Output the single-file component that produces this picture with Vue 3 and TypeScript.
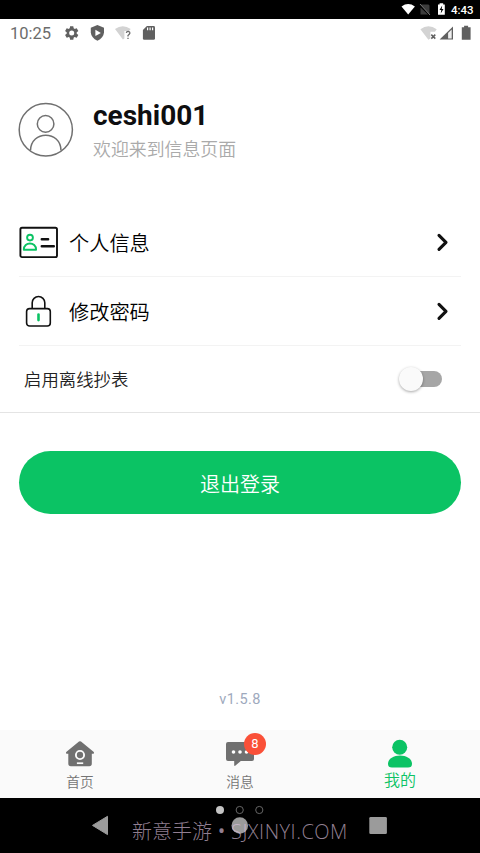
<script setup lang="ts">
import { ref } from 'vue'

interface MenuRow {
  id: string
  label: string
}

const rows: MenuRow[] = [
  { id: 'profile', label: '个人信息' },
  { id: 'password', label: '修改密码' },
]
const offline = ref(false)
const unread = ref(8)
</script>

<template>
  <div class="screen">
    <header class="device-bar">
      <svg class="device-icons" viewBox="0 0 50 19" width="50" height="19">
        <path d="M1.5 6.4Q8.2 1.8 14.9 6.4L8.2 14.6Z" fill="#fff" />
        <path d="M20.5 4.5L29.5 14.5V5.5L28.5 4.5H23.5M20.5 7.5V14.5H28" fill="#3c3c3c" />
        <path d="M20 4L30 15" stroke="#777" stroke-width="1" />
        <path d="M38 4.6h1.6V3.3h3.6v1.3h1.6v10.1H38z" fill="#fff" />
        <path d="M42.2 5.6L39.5 10h1.8l-.6 3.4L43.5 9h-1.8z" fill="#000" />
      </svg>
      <span class="device-time">4:43</span>
    </header>

    <div class="app-bar">
      <span class="app-time">10:25</span>
      <svg class="app-icons" viewBox="0 0 100 28" width="100" height="28">
        <g transform="translate(3.3 5.6) scale(.7)">
          <path fill="#606060" fill-rule="evenodd" d="M19.14 12.94c.04-.3.06-.61.06-.94 0-.32-.02-.64-.07-.94l2.03-1.58a.49.49 0 0 0 .12-.61l-1.92-3.32a.488.488 0 0 0-.59-.22l-2.39.96c-.5-.38-1.03-.7-1.62-.94l-.36-2.54a.484.484 0 0 0-.48-.41h-3.84c-.24 0-.43.17-.47.41l-.36 2.54c-.59.24-1.13.57-1.62.94l-2.39-.96c-.22-.08-.47 0-.59.22L2.74 8.87c-.12.21-.08.47.12.61l2.03 1.58c-.05.3-.09.63-.09.94s.02.64.07.94l-2.03 1.58a.49.49 0 0 0-.12.61l1.92 3.32c.12.22.37.29.59.22l2.39-.96c.5.38 1.03.7 1.62.94l.36 2.54c.05.24.24.41.48.41h3.84c.24 0 .44-.17.47-.41l.36-2.54c.59-.24 1.13-.56 1.62-.94l2.39.96c.22.08.47 0 .59-.22l1.92-3.32c.12-.22.07-.47-.12-.61zM12 15.6A3.6 3.6 0 1 1 12 8.4a3.6 3.6 0 0 1 0 7.2z" />
        </g>
        <path d="M37.4 6.1L44 8.7V13.5Q43.5 18.9 37.4 21.7Q31.3 18.9 30.8 13.5V8.7Z" fill="#606060" />
        <path d="M35.4 10.7L40.9 13.9L35.4 17.1Z" fill="#fff" />
        <path d="M55 10Q62.7 4.3 70.7 10L69 12.1H64.4V19.5L62.9 20.5Z" fill="#d3d3d3" />
        <path d="M66.3 13.9Q66.5 12.3 68.2 12.3Q70 12.5 69.9 14Q69.7 15 68 16.4V17.6M68 18.7v1.3" fill="none" stroke="#6c6c6c" stroke-width="1.3" />
        <path d="M86.9 7H93.6Q95 7 95 8.4V19.5Q95 20.8 93.6 20.8H84.2Q82.9 20.8 82.9 19.5V11Z" fill="#606060" />
        <path d="M87.6 8.6v2.7M90.1 8.6v2.7M92.6 8.6v2.7" stroke="#fff" stroke-width="1.2" />
      </svg>
      <svg class="signal-icons" viewBox="0 0 55 28" width="55" height="28">
        <path d="M.4 10.3Q8.4 4 16.7 10.3L15 12.7H10.4V19.5L8.4 20.7Z" fill="#d3d3d3" />
        <path d="M11.3 15.6l4 4M15.3 15.6l-4 4" stroke="#606060" stroke-width="1.5" />
        <path d="M19.6 20.6L33 7.4V20.6Z" fill="#606060" />
        <path d="M28.1 13.9L31.7 10.5V19.5H28.1Z" fill="#eee" />
        <path d="M41.8 8.3h2.3V6.7h4v1.6h2.5V20.7h-8.8z" fill="#606060" />
      </svg>
    </div>

    <main class="content">
      <section class="user">
        <svg class="avatar" viewBox="0 0 56 56" width="56" height="56">
          <g fill="none" stroke="#707070" stroke-width="1.5">
            <ellipse cx="27.8" cy="27.7" rx="26.6" ry="26.2" />
            <circle cx="27.6" cy="21.9" r="8.3" />
            <path d="M12.5 48.5C12.8 28 42.8 28 43 48.5" />
          </g>
        </svg>
        <div class="user-text">
          <h1 class="name">ceshi001</h1>
          <p class="welcome">欢迎来到信息页面</p>
        </div>
      </section>

      <section class="menu">
        <button v-for="row in rows" :key="row.id" class="row" type="button">
          <svg v-if="row.id === 'profile'" class="row-icon" viewBox="0 0 40 34" width="40" height="34">
            <rect x="1.4" y="2.8" width="36.6" height="29.3" rx="1.6" fill="#fff" stroke="#111" stroke-width="1.9" />
            <g fill="none" stroke="#0bc364" stroke-width="1.9" stroke-linejoin="round">
              <circle cx="11" cy="12.6" r="2.9" />
              <path d="M4.8 24.8C4.7 16.4 17.2 16.4 17.1 24.8Z" />
            </g>
            <path d="M22.8 14.3h6.3M22.8 21.2h12" stroke="#111" stroke-width="2.5" stroke-linecap="round" />
          </svg>
          <svg v-else class="row-icon" viewBox="0 0 40 34" width="40" height="34">
            <rect x="7.6" y="14.6" width="23.7" height="17.4" rx="3" fill="none" stroke="#111" stroke-width="1.6" />
            <path d="M13.2 14.6V8.8A6.3 6.3 0 0 1 25.8 8.8V14.6" fill="none" stroke="#111" stroke-width="1.6" />
            <path d="M19.5 20.5v5.6" stroke="#0bc364" stroke-width="2.6" stroke-linecap="round" />
          </svg>
          <span class="row-label">{{ row.label }}</span>
          <svg class="chevron" viewBox="0 0 14 20" width="14" height="20">
            <path d="M3 3.3L10 10.3L3 17.3" fill="none" stroke="#111" stroke-width="3.1" stroke-linecap="round" stroke-linejoin="round" />
          </svg>
        </button>
      </section>

      <section class="offline">
        <span class="offline-label">启用离线抄表</span>
        <button class="switch" :class="{ on: offline }" type="button" @click="offline = !offline">
          <span class="thumb"></span>
        </button>
      </section>

      <button class="logout" type="button">退出登录</button>
      <p class="version">v1.5.8</p>
    </main>

    <nav class="tabs">
      <div class="tab">
        <svg class="tab-icon" viewBox="0 0 32 32" width="32" height="32">
          <path d="M15 3.5Q16 2.9 17 3.5L29.5 13.8Q30.7 15.2 29.2 15.8H27.8V25.6Q27.8 28.2 25.3 28.2H6.8Q4.3 28.2 4.3 25.6V15.8H2.8Q1.3 15.2 2.5 13.8Z" fill="#707070" />
          <circle cx="16" cy="17" r="4.1" fill="none" stroke="#fafafa" stroke-width="1.9" />
          <path d="M12.9 25.2h6.3" stroke="#fafafa" stroke-width="1.7" />
        </svg>
        <span class="tab-label">首页</span>
      </div>
      <div class="tab">
        <div class="icon-wrap">
          <svg class="tab-icon" viewBox="0 0 32 32" width="32" height="32">
            <path d="M4 4H28Q30 4 30 6V21Q30 23 28 23H16.8L11.2 27.8Q10.2 28.2 10.2 27V23H4Q2 23 2 21V6Q2 4 4 4Z" fill="#707070" />
            <g fill="#fff"><circle cx="9.5" cy="14" r="1.8" /><circle cx="16" cy="14" r="1.8" /><circle cx="22.5" cy="14" r="1.8" /></g>
          </svg>
          <span class="badge">{{ unread }}</span>
        </div>
        <span class="tab-label">消息</span>
      </div>
      <div class="tab active">
        <svg class="tab-icon" viewBox="0 0 32 32" width="32" height="32">
          <circle cx="15.7" cy="9.3" r="7.5" fill="#0bc364" />
          <path d="M4 26C4 14.5 28 14.5 28 26Q28 29.5 24 29.5H8Q4 29.5 4 26Z" fill="#0bc364" />
        </svg>
        <span class="tab-label">我的</span>
      </div>
    </nav>

    <footer class="nav-bar">
      <svg class="nav-shapes" viewBox="0 0 480 55" width="480" height="55">
        <path d="M92.5 27.4L107.5 18.3V36.6Z" fill="#9b9b9b" stroke="#9b9b9b" stroke-linejoin="round" />
        <circle cx="239.8" cy="27.5" r="8.3" fill="#9b9b9b" />
        <rect x="369.3" y="19" width="17.6" height="17" rx="1.3" fill="#9b9b9b" />
        <circle cx="220" cy="12" r="4" fill="#c4c4c4" />
        <circle cx="239.7" cy="12" r="3.6" fill="none" stroke="#666" />
        <circle cx="259.3" cy="12" r="3.6" fill="none" stroke="#666" />
      </svg>
      <span class="watermark"><span>新意手游</span><span class="dot">•</span><span class="site">SJXINYI.COM</span></span>
    </footer>
  </div>
</template>

<style>
body {
  margin: 0;
  background: #fff;
}
</style>

<style scoped>
.screen {
  display: flex;
  flex-direction: column;
  width: 480px;
  height: 853px;
  overflow: hidden;
  background: #fff;
  font-family: Roboto, "Noto Sans CJK SC", sans-serif;
}
svg {
  display: block;
  flex: none;
}
button {
  border: 0;
  padding: 0;
  background: none;
  font: inherit;
  color: inherit;
  text-align: left;
}
h1, p {
  margin: 0;
}
.device-bar {
  display: flex;
  align-items: center;
  justify-content: flex-end;
  height: 19px;
  padding-right: 7px;
  background: #000;
  flex: none;
}
.device-time {
  width: 22px;
  margin-left: 1px;
  color: #fff;
  font: 500 11.5px/20px Roboto, sans-serif;
  white-space: nowrap;
}
.app-bar {
  display: flex;
  height: 28px;
  padding: 0 5px 0 10px;
  flex: none;
}
.app-time {
  width: 50px;
  color: #6c6c6c;
  font-size: 16.5px;
  line-height: 29px;
}
.signal-icons {
  margin-left: auto;
}
.content {
  display: flex;
  flex-direction: column;
  height: 683px;
  flex: none;
}
.user {
  display: flex;
  gap: 19px;
  padding: 55px 18px 0;
  height: 106px;
}
.name {
  color: #0e0e10;
  font-weight: 700;
  font-size: 28px;
  line-height: 30px;
  margin-top: -1px;
}
.welcome {
  margin-top: 7px;
  color: #aaa;
  font-weight: 350;
  font-size: 17.9px;
  line-height: 24px;
}
.menu {
  padding: 0 19px;
}
.row {
  display: flex;
  align-items: center;
  width: 100%;
  height: 69px;
  padding-right: 11px;
  border-bottom: 1px solid #f3f3f3;
  color: #000;
}
.row-label {
  margin-left: 10px;
  padding-top: 4px;
  font-weight: 350;
  font-size: 20.2px;
  line-height: 30px;
}
.chevron {
  margin-left: auto;
}
.offline {
  display: flex;
  align-items: center;
  justify-content: space-between;
  height: 66px;
  padding: 0 38px 0 24px;
  border-bottom: 1px solid #e4e4e4;
}
.offline-label {
  padding-top: 2px;
  color: #222;
  font-weight: 350;
  font-size: 17.4px;
  line-height: 26px;
}
.switch {
  display: flex;
  align-items: center;
  width: 37px;
  height: 16px;
  border-radius: 8px;
  background: #a6a6a6;
}
.thumb {
  width: 24px;
  height: 24px;
  margin-left: -6px;
  border-radius: 50%;
  background: #fafafa;
  box-shadow: 0 1px 3px rgba(0, 0, 0, 0.35);
  flex: none;
}
.switch.on {
  background: #8be3b4;
}
.switch.on .thumb {
  margin-left: 19px;
  background: #0bc364;
}
.logout {
  height: 63px;
  margin: 37.6px 19px 0;
  border-radius: 32px;
  background: #0bc364;
  color: #fff;
  font-weight: 350;
  font-size: 20px;
  line-height: 68px;
  text-align: center;
}
.version {
  margin-top: 175.4px;
  color: #9ea9bd;
  font-size: 14.5px;
  line-height: 22px;
  letter-spacing: 0.4px;
  text-align: center;
}
.tabs {
  display: flex;
  height: 68px;
  background: #fafafa;
  flex: none;
}
.tab {
  display: flex;
  flex-direction: column;
  align-items: center;
  width: 160px;
  padding-top: 8px;
  color: #747474;
}
.tab-label {
  margin-top: 2px;
  font-weight: 350;
  font-size: 13.7px;
  line-height: 20px;
}
.active .tab-label {
  margin-top: 1px;
  color: #0bc364;
  font-size: 16px;
}
.icon-wrap {
  position: relative;
}
.badge {
  position: absolute;
  left: 20px;
  top: -5px;
  width: 22px;
  height: 22px;
  border-radius: 50%;
  background: #fa5038;
  color: #fff;
  font-size: 13px;
  line-height: 22px;
  text-align: center;
}
.nav-bar {
  position: relative;
  height: 55px;
  background: #000;
  flex: none;
}
.watermark {
  position: absolute;
  left: 132px;
  top: 18px;
  display: flex;
  color: rgba(222, 192, 222, 0.66);
  font: 300 20px/30px "Noto Sans CJK SC", sans-serif;
  white-space: nowrap;
}
.dot {
  width: 19px;
  font-family: "Open Sans", sans-serif;
  font-weight: 400;
  text-align: center;
}
.site {
  padding-top: 1px;
  font-family: "Open Sans", sans-serif;
  font-weight: 300;
  font-size: 20px;
  letter-spacing: 0.5px;
}
</style>
